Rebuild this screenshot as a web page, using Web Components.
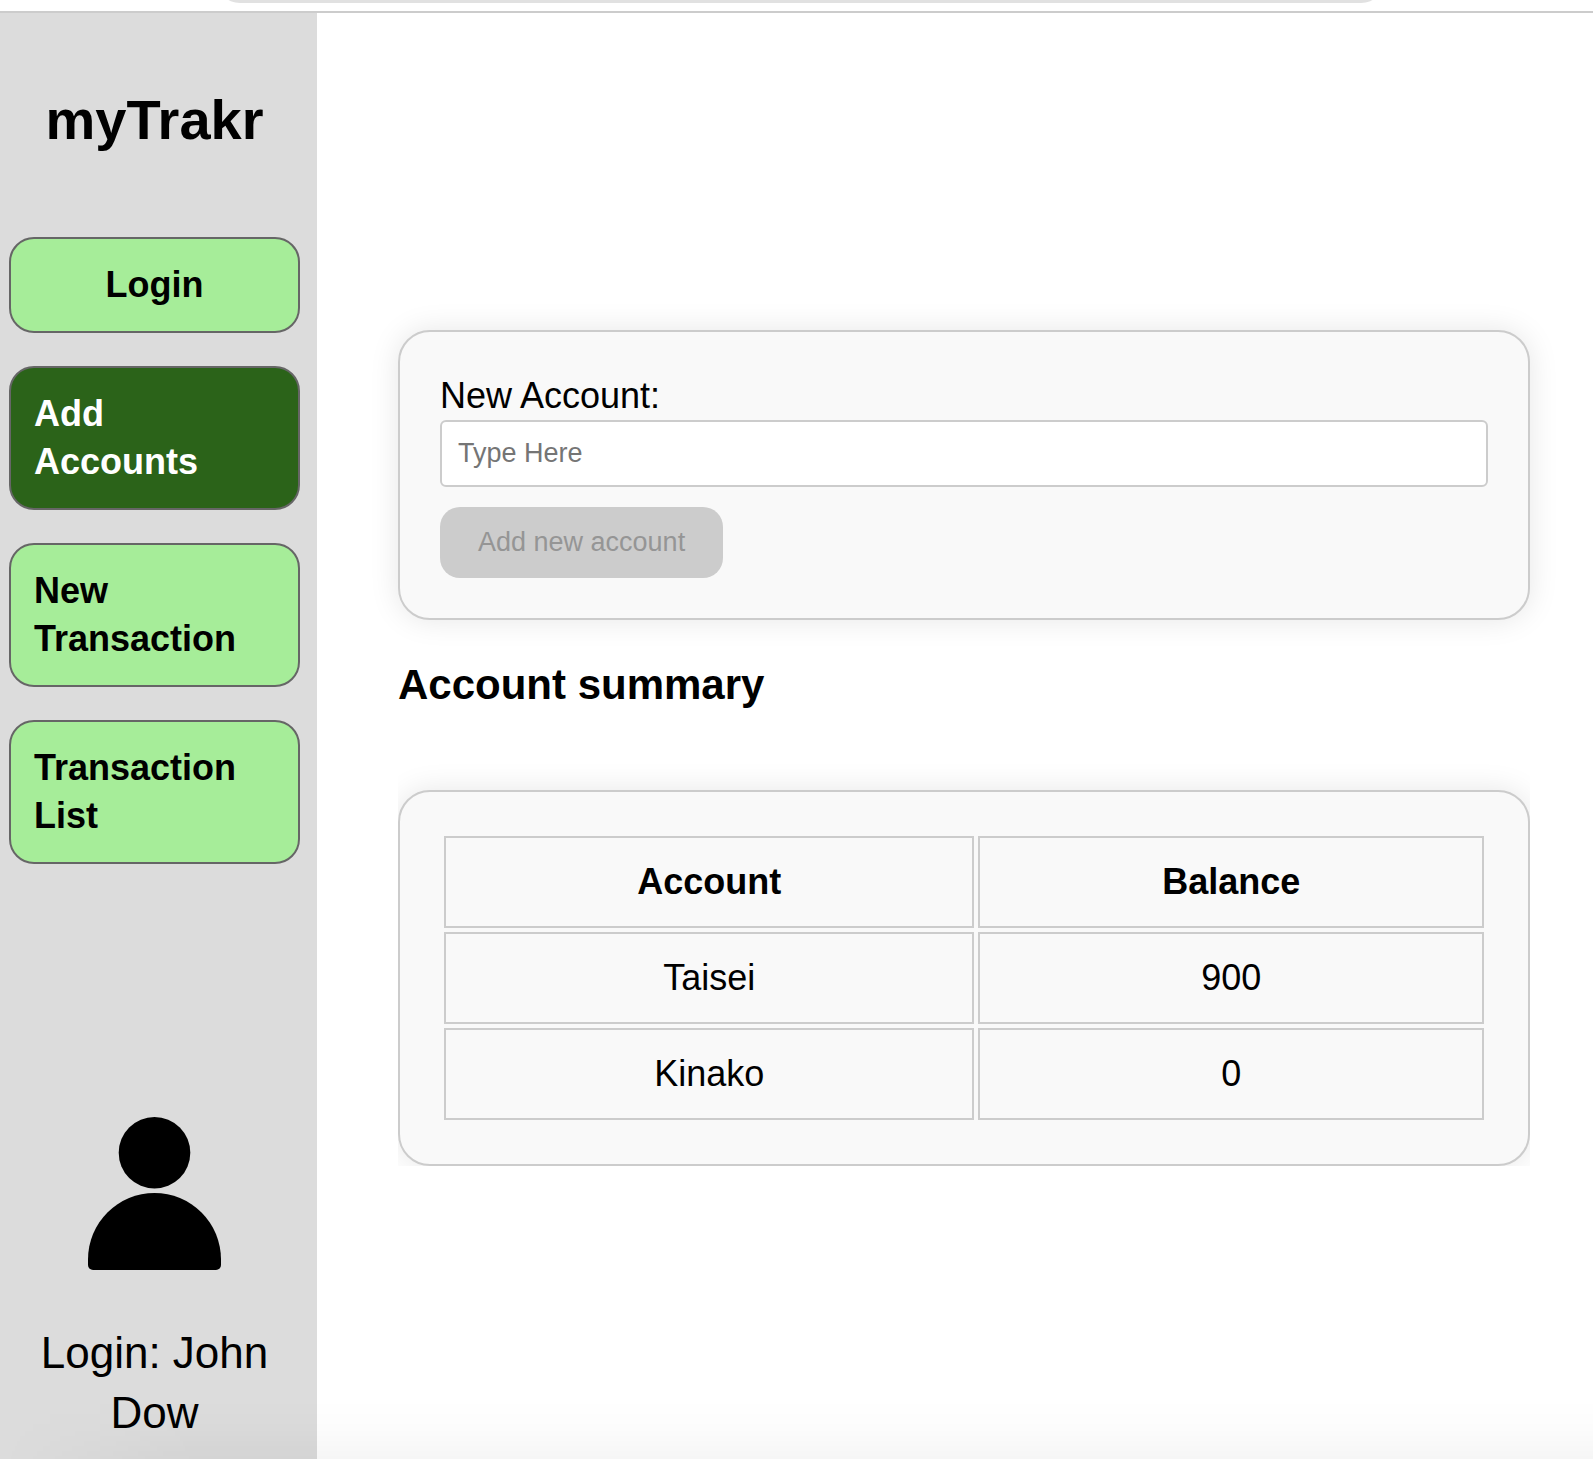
<!DOCTYPE html>
<html lang="en">
<head>
<meta charset="utf-8">
<meta name="viewport" content="width=device-width, initial-scale=1">
<title>myTrakr</title>
<style>
  html, body { margin: 0; min-height: 100%; background: #fff; }
  body { color: #000; font: 36px/48px "Liberation Sans", Arial, sans-serif; }
</style>
</head>
<body>
<trakr-app></trakr-app>

<template id="trakr-app">
  <style>
    :host { display: flex; flex-direction: column; min-height: 100vh; }
    .body { display: flex; flex: 1; }
    trakr-sidebar { flex: 0 0 317px; }
    main { flex: 1; min-width: 0; padding: 317px 63px 0 81px; }
    h2 { margin: 37px 0 0; font-size: 42px; line-height: 56px; }
    .list { overflow: hidden; padding-top: 77px; }
    .fade { position: fixed; left: 0; right: 0; bottom: 0; height: 60px; pointer-events: none;
      background: linear-gradient(to bottom, rgba(0,0,0,0), rgba(0,0,0,.01) 50%, rgba(0,0,0,.035));
      -webkit-mask: linear-gradient(to right, transparent, #000 200px); mask: linear-gradient(to right, transparent, #000 200px); }
  </style>
  <top-edge></top-edge>
  <div class="body">
    <trakr-sidebar></trakr-sidebar>
    <main>
      <panel-card><account-form></account-form></panel-card>
      <h2>Account summary</h2>
      <div class="list"><panel-card><account-table></account-table></panel-card></div>
    </main>
  </div>
  <div class="fade"></div>
</template>

<template id="top-edge">
  <style>
    :host { display: block; box-sizing: border-box; height: 13px; padding: 0 208px 0 216px; border-bottom: 2px solid #ccc; background: #fff; overflow: hidden; }
    div { height: 3px; overflow: hidden; display: flex; align-items: flex-end; }
    span { flex: 1; height: 48px; border-radius: 24px; background: #e1e1e1; }
  </style>
  <div><span></span></div>
</template>

<template id="trakr-sidebar">
  <style>
    :host { display: flex; flex-direction: column; box-sizing: border-box; padding: 71px 17px 16px 9px; background: #dcdcdc; }
    h1 { margin: 0 0 81px; font-size: 56px; line-height: 72px; text-align: center; }
    nav { display: flex; flex-direction: column; gap: 33px; }
    user-badge { margin-top: auto; }
  </style>
  <h1>myTrakr</h1>
  <nav>
    <nav-item centered>Login</nav-item>
    <nav-item active>Add<br>Accounts</nav-item>
    <nav-item>New<br>Transaction</nav-item>
    <nav-item>Transaction<br>List</nav-item>
  </nav>
  <user-badge>Login: John Dow</user-badge>
</template>

<template id="nav-item">
  <style>
    :host { display: block; }
    a { display: flex; align-items: center; box-sizing: border-box; min-height: 96px; padding: 22px 23px; border: 2px solid #666; border-radius: 25px;
      background: #a6ed99; color: #000; font-weight: bold; line-height: 48px; text-decoration: none; }
    :host([centered]) a { justify-content: center; }
    :host([active]) a { background: #2b6319; color: #fff; }
  </style>
  <a href="#"><span><slot></slot></span></a>
</template>

<template id="user-badge">
  <style>
    :host { display: flex; flex-direction: column; align-items: center; gap: 53px; }
    svg { display: block; }
    p { margin: 0; font-size: 44px; line-height: 60px; text-align: center; }
  </style>
  <svg width="133" height="153" viewBox="0 0 133 153" aria-hidden="true">
    <circle cx="66.5" cy="35.8" r="35.8"/>
    <path d="M0 142.5A66.5 66.5 0 0 1 133 142.5V148a5 5 0 0 1-5 5H5a5 5 0 0 1-5-5Z"/>
  </svg>
  <p><slot></slot></p>
</template>

<template id="panel-card">
  <style>
    :host { display: block; padding: 40px; border: 2px solid #ccc; border-radius: 32px; background: #f9f9f9; box-shadow: 0 0 30px rgba(0,0,0,.1); }
  </style>
  <slot></slot>
</template>

<template id="account-form">
  <style>
    :host { display: block; }
    form { display: flex; flex-direction: column; align-items: flex-start; margin: 0; }
    input, button { box-sizing: border-box; font-family: inherit; font-size: 27px; }
    input { width: 100%; height: 67px; margin: 0 0 20px; padding: 0 16px; border: 2px solid #ccc; border-radius: 6px; background: #fff; }
    input::placeholder { color: #757575; }
    button { height: 71px; padding: 0 38px; border: 0; border-radius: 20px; background: #ccc; color: #959595; }
  </style>
  <form>
    <label for="name">New Account:</label>
    <input id="name" type="text" placeholder="Type Here">
    <button type="submit" disabled>Add new account</button>
  </form>
</template>

<template id="account-table">
  <style>
    :host { display: block; }
    table { width: 100%; border-collapse: separate; border-spacing: 4px; }
    th, td { padding: 20px; border: 2px solid #ccc; text-align: center; }
    col:first-child { width: 51.2%; }
  </style>
  <table>
    <colgroup><col><col></colgroup>
    <thead><tr><th scope="col">Account</th><th scope="col">Balance</th></tr></thead>
    <tbody>
      <tr><td>Taisei</td><td>900</td></tr>
      <tr><td>Kinako</td><td>0</td></tr>
    </tbody>
  </table>
</template>

<script>
  class TemplateElement extends HTMLElement {
    constructor() {
      super();
      const template = document.getElementById(this.localName);
      this.attachShadow({ mode: 'open' }).append(template.content.cloneNode(true));
    }
  }
  customElements.define('top-edge', class TopEdge extends TemplateElement {});
  customElements.define('nav-item', class NavItem extends TemplateElement {});
  customElements.define('user-badge', class UserBadge extends TemplateElement {});
  customElements.define('panel-card', class PanelCard extends TemplateElement {});
  customElements.define('account-form', class AccountForm extends TemplateElement {
    connectedCallback() {
      const input = this.shadowRoot.querySelector('input');
      const button = this.shadowRoot.querySelector('button');
      input.addEventListener('input', () => { button.disabled = !input.value.trim(); });
    }
  });
  customElements.define('account-table', class AccountTable extends TemplateElement {});
  customElements.define('trakr-sidebar', class TrakrSidebar extends TemplateElement {});
  customElements.define('trakr-app', class TrakrApp extends TemplateElement {});
</script>
</body>
</html>
